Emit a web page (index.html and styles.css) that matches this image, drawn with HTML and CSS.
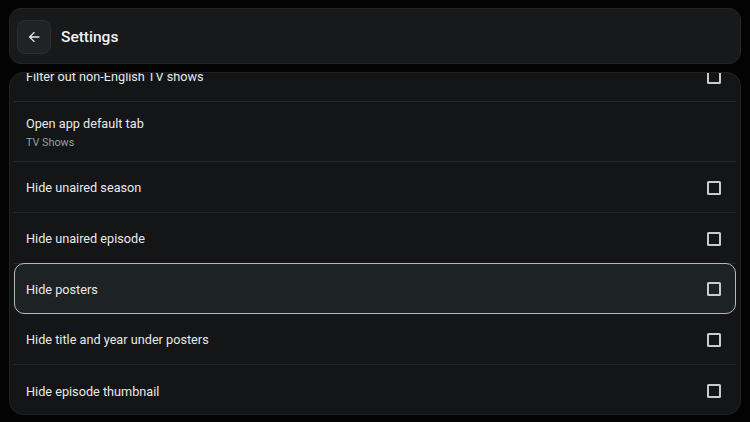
FILE: index.html
```html
<!DOCTYPE html>
<html>
<head>
<meta charset="utf-8">
<link rel="stylesheet" href="styles.css">
</head>
<body>
<div class="app">
  <header class="topbar">
    <button class="back" aria-label="Back">
      <svg width="16" height="16" viewBox="0 0 24 24"><path d="M20 11H7.83l5.59-5.59L12 4l-8 8 8 8 1.41-1.41L7.83 13H20v-2z" fill="#eceeee"/></svg>
    </button>
    <h1 class="title">Settings</h1>
  </header>
  <main class="panel">
    <div class="list">
      <div class="row"><span class="label">Filter out non-English TV shows</span><span class="check"></span></div>
      <div class="row tall"><div class="texts"><span class="label">Open app default tab</span><span class="sub">TV Shows</span></div></div>
      <div class="row"><span class="label">Hide unaired season</span><span class="check"></span></div>
      <div class="row"><span class="label">Hide unaired episode</span><span class="check"></span></div>
      <div class="row focused"><span class="label">Hide posters</span><span class="check"></span></div>
      <div class="row"><span class="label">Hide title and year under posters</span><span class="check"></span></div>
      <div class="row last"><span class="label">Hide episode thumbnail</span><span class="check"></span></div>
    </div>
  </main>
</div>
</body>
</html>
```
FILE: styles.css
```css
* { box-sizing: border-box; }
html, body { margin: 0; padding: 0; background: #030303; }
body { font-family: Roboto, "Noto Sans", sans-serif; color: #e4e6e6; }
.app { width: 750px; height: 422px; padding: 8px 9px 7px 9px; display: flex; flex-direction: column; gap: 8px; }
.topbar { height: 56px; flex: none; background: #17191a; border: 1px solid #222526; border-radius: 12px; display: flex; align-items: center; padding: 1px 0 0 7px; gap: 10px; }
.back { width: 34px; height: 34px; border-radius: 8px; background: #202324; border: 1px solid #2b2e2f; display: flex; align-items: center; justify-content: center; padding: 0; }
.title { margin: 0; font-size: 15.5px; font-weight: 500; color: #f0f2f2; }
.panel { flex: 1; min-height: 0; background: #131516; border: 1px solid #1f2223; border-radius: 14px; overflow: hidden; padding: 0 4px; }
.list { margin-top: -22px; display: flex; flex-direction: column; }
.row { height: 51px; display: flex; align-items: center; justify-content: space-between; padding: 1px 15px 0 12px; border-bottom: 1px solid #25292a; border-radius: 0; }
.row.tall { height: 60px; }
.row.last { border-bottom: none; }
.row.focused { background: #1d2224; border: 1.5px solid #b4b9ba; border-radius: 10px; margin-top: -1px; height: 51px; padding-left: 11px; padding-right: 14px; }
.label { font-size: 12.7px; color: #e8eaea; }
.texts { display: flex; flex-direction: column; gap: 5px; }
.sub { font-size: 10.8px; color: #9a9e9f; }
.check { width: 14px; height: 14px; border: 2px solid #c9cccd; border-radius: 1.5px; flex: none; }
```
